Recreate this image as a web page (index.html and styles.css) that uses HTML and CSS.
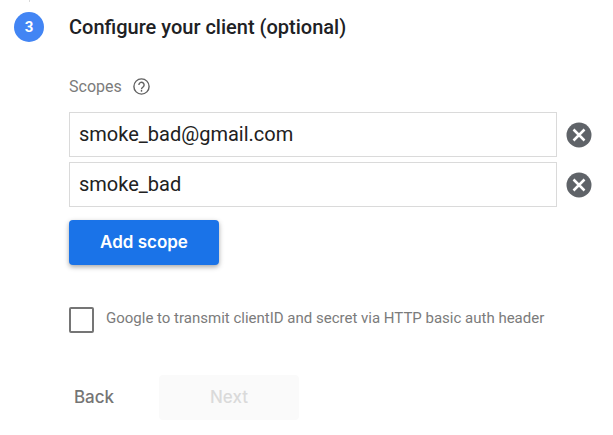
FILE: index.html
```
<!DOCTYPE html>
<html lang="en">
<head>
    <meta charset="UTF-8">
    <meta name="viewport" content="width=device-width, initial-scale=1.0">
    <title>Configure your client</title>
    <link rel="stylesheet" href="styles.css">
</head>
<body>
    <form class="step">
        <!-- Step number and the line from the previous step -->
        <div class="step-marker">
            <span class="step-line"></span>
            <span class="step-number">3</span>
        </div>
        <div class="step-content">
            <h2 class="step-title">Configure your client (optional)</h2>

            <div class="scopes-label">
                <span id="scopes">Scopes</span>
                <button type="button" class="icon-button" aria-label="Help">
                    <svg width="17" height="17" viewBox="0 0 17 17" fill="none" stroke="#616161" stroke-width="1.4">
                        <circle cx="8.5" cy="8.5" r="7.6"/>
                        <path d="M5.900 7a2.600 2.600 0 1 1 4.400 1.800c-1 .9-1.800 1.200-1.800 2.400"/>
                        <path d="M8.500 12v1.700"/>
                    </svg>
                </button>
            </div>

            <div class="scope-row">
                <input type="text" class="scope-input" value="smoke_bad@gmail.com" aria-labelledby="scopes">
                <button type="button" class="icon-button" aria-label="Remove scope">
                    <svg width="26" height="26" viewBox="0 0 26 26">
                        <circle cx="13" cy="13" r="12.5" fill="#5f6368"/>
                        <path d="M7.500 7.500l11 11M18.500 7.500l-11 11" stroke="#fff" stroke-width="2.5"/>
                    </svg>
                </button>
            </div>
            <div class="scope-row">
                <input type="text" class="scope-input" value="smoke_bad" aria-labelledby="scopes">
                <button type="button" class="icon-button" aria-label="Remove scope">
                    <svg width="26" height="26" viewBox="0 0 26 26">
                        <circle cx="13" cy="13" r="12.5" fill="#5f6368"/>
                        <path d="M7.500 7.500l11 11M18.500 7.500l-11 11" stroke="#fff" stroke-width="2.5"/>
                    </svg>
                </button>
            </div>
            <button type="button" class="button add-button">Add scope</button>

            <div class="auth-row">
                <input type="checkbox" id="auth" class="checkbox">
                <label for="auth" class="auth-label">Google to transmit clientID and secret via HTTP basic auth header</label>
            </div>

            <div class="actions">
                <button type="button" class="button back-button">Back</button>
                <button type="submit" class="button next-button" disabled>Next</button>
            </div>
        </div>
    </form>
</body>
</html>
```
FILE: styles.css
```
* {
    box-sizing: border-box;
}
body {
    margin: 0;
    background-color: #fff;
    color: #202124;
    font-family: Roboto, Arial, sans-serif;
}
.step {
    display: flex;
    gap: 25px;
    padding: 0 21px 15px 14px;
}
.step-marker {
    display: flex;
    flex-direction: column;
    align-items: center;
    gap: 10px;
    flex-shrink: 0;
}
.step-line {
    width: 1px;
    height: 2px;
    background-color: #dadada;
}
.step-number {
    width: 30px;
    height: 30px;
    border-radius: 50%;
    background-color: #4285f4;
    color: #fff;
    font-size: 15px;
    font-weight: 700;
    line-height: 30px;
    text-align: center;
}
.step-content {
    flex: 1;
    min-width: 0;
    padding-top: 12px;
}
.step-title {
    margin: 0 0 32px;
    font-size: 20px;
    font-weight: 500;
    line-height: 30px;
}
.scopes-label {
    display: flex;
    align-items: center;
    gap: 11px;
    height: 25px;
    margin-bottom: 13px;
    color: #7b7b7b;
    font-size: 16px;
}
.icon-button {
    display: flex;
    padding: 0;
    border: 0;
    background: none;
    cursor: pointer;
}
.scope-row {
    display: flex;
    align-items: center;
    gap: 9px;
    margin-bottom: 5px;
}
.scope-input {
    flex: 1;
    min-width: 0;
    height: 45px;
    padding: 0 9px 2px;
    border: 1px solid #dadada;
    background-color: #fff;
    color: #212121;
    font-family: inherit;
    font-size: 20px;
}
.button {
    height: 45px;
    padding: 0 0 2px;
    border: 0;
    border-radius: 4px;
    font-family: "Google Sans", Inter, sans-serif;
    font-size: 17px;
    font-weight: 500;
    cursor: pointer;
}
.add-button {
    width: 150px;
    margin-top: 8px;
    background-color: #1a73e8;
    color: #fff;
    font-weight: 600;
    box-shadow: 0 2px 5px rgba(0, 0, 0, 0.35);
}
.auth-row {
    display: flex;
    gap: 12px;
    margin-top: 42px;
}
.checkbox {
    flex-shrink: 0;
    width: 25px;
    height: 26px;
    margin: 0;
    border: 2px solid #757575;
    border-radius: 2px;
    background-color: #fff;
    appearance: none;
}
.checkbox:checked {
    background-color: #1a73e8;
}
.auth-label {
    color: #7b7b7b;
    font-size: 15px;
    line-height: 22px;
}
.actions {
    display: flex;
    gap: 40px;
    margin-top: 42px;
}
.back-button {
    width: 50px;
    background: none;
    color: #757575;
}
.next-button {
    width: 140px;
    background-color: #fafafa;
    color: #dadada;
    cursor: default;
}
```
